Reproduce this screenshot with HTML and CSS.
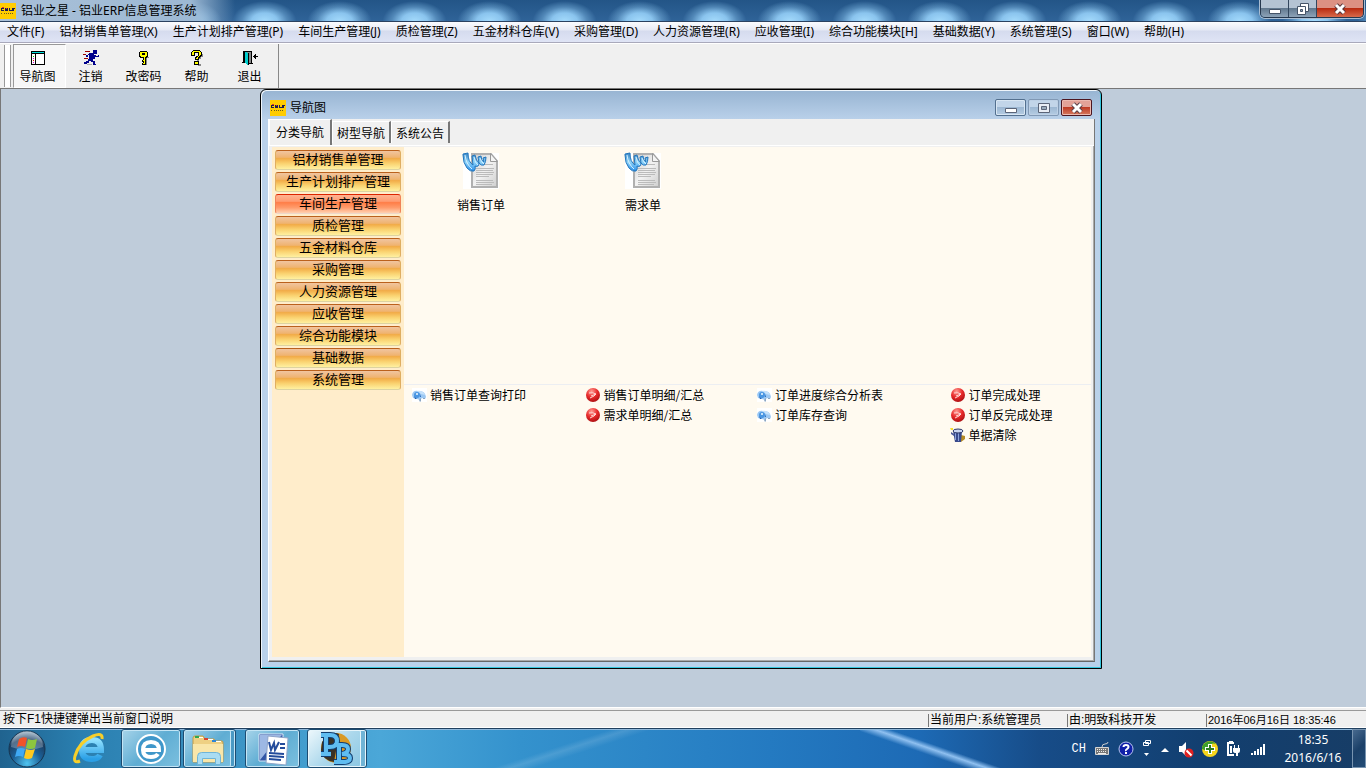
FILE: index.html
```html
<!DOCTYPE html>
<html lang="zh-CN">

<head>
  <meta charset="utf-8">
  <meta name="viewport" content="width=device-width, initial-scale=1">
  <title>铝业之星 - 铝业ERP信息管理系统</title>
  <link rel="stylesheet" href="styles.css">
</head>

<body>
  <!-- shared icons -->
  <svg class="defs" aria-hidden="true">
    <defs>
      <linearGradient id="pageFill" x1="0" y1="0" x2="1" y2="1">
        <stop offset="0" stop-color="#c9c9c9" />
        <stop offset="0.5" stop-color="#f2f2f2" />
        <stop offset="1" stop-color="#cfcfcf" />
      </linearGradient>
      <linearGradient id="clipFill" x1="0" y1="0" x2="0" y2="1">
        <stop offset="0" stop-color="#3a86c4" />
        <stop offset="0.5" stop-color="#8fd4fa" />
        <stop offset="1" stop-color="#2a8fe8" />
      </linearGradient>
      <radialGradient id="redFill" cx="0.4" cy="0.25" r="0.8">
        <stop offset="0" stop-color="#ff9c94" />
        <stop offset="0.5" stop-color="#e82c2c" />
        <stop offset="1" stop-color="#a80c10" />
      </radialGradient>
      <radialGradient id="orbFill" cx="0.5" cy="0.9" r="0.9">
        <stop offset="0" stop-color="#4fc4f0" />
        <stop offset="0.45" stop-color="#1b5f96" />
        <stop offset="0.75" stop-color="#1c3f63" />
        <stop offset="1" stop-color="#a5bccd" />
      </radialGradient>
      <linearGradient id="ieFill" x1="0" y1="0" x2="0" y2="1">
        <stop offset="0" stop-color="#8fe0ff" />
        <stop offset="1" stop-color="#2a9fe6" />
      </linearGradient>
      <symbol id="logo" viewBox="0 0 16 16">
        <path fill="#ffcc00" d="M0 0h16v16H0z" />
        <path fill="#1c1c50" d="M1 5h3v1H2v1h2v1H1zM5 5h3v3H5zM9 5h1v2h2v1H9zM12 5h3v1h-1v2h-2z" />
        <path fill="#d33" d="M2 4h2v1H2zM6 5h1v1H6z" />
        <path fill="#6b5a20" d="M1 10h1v1H1zM4 10h1v1H4zM6 10h1v1H6zM8 10h1v1H8zM10 10h1v1h-1zM12 10h1v1h-1z" />
      </symbol>
      <symbol id="doc" viewBox="0 0 38 38">
        <path fill="#fff" d="M1 1h36v36H1z" />
        <path fill="url(#pageFill)" stroke="#b0b0b0" stroke-width="2" d="M10 2h19l6 7v26H10z" />
        <path fill="#f4f4f4" stroke="#999" d="M28.500 1.500v8h7z" />
        <path stroke="#bbb" stroke-width="1"
          d="M22 12.500h9M14 16.500h18M14 18.500h17M14 20.500h18M14 22.500h17M14 24.500h13M14 28.500h17M14 30.500h18M14 32.500h16" />
        <path fill="url(#clipFill)" stroke="#2476bc" stroke-width="1"
          d="M1 2l5-1q0 9 5 12l-1-9l3-1q1 6 4 8l-1-6l3-1q0 4 3 6l-1-4l3-1q0 5-2 8q-3 1-5-2q0 3-1 3q-2 1-3 0q1 3-1 5q-4 1-7-3q-4-5-4-13z" />
        <path fill="none" stroke="#d6f1ff" stroke-width="1" d="M3 3q1 9 7 14M12 5q1 6 4 8M18 6q1 4 4 6" />
      </symbol>
      <symbol id="bubble" viewBox="0 0 16 16">
        <path fill="#fff" d="M1 1h15v14H1z" />
        <path fill="#9cc8f3" d="M1 8q1-5 6-4q7-1 8 6l-1 2l-3-1l-2 2l-3-1l-4-1z" />
        <path fill="#c4e1fb" d="M6 4q6-1 8 4l-4-1z" />
        <circle cx="6" cy="8" r="3" fill="#4a96e2" />
        <circle cx="6" cy="7" r="1" fill="#f0faff" />
        <path fill="#1e62b5" d="M3 9l3 3H4zM9 7l1 3H9z" />
        <path fill="#8ba6c2" d="M8 13l2-2v3l-1 1zM12 11h2v1h-2z" />
      </symbol>
      <symbol id="red" viewBox="0 0 16 16">
        <circle cx="8" cy="8" r="7" fill="url(#redFill)" />
        <path fill="none" stroke="#ffd9d6" stroke-width="1" d="M4 6q4-1 7 1q-1 2-6 4M6 9l5-2" />
      </symbol>
      <symbol id="trash" viewBox="0 0 16 16">
        <path fill="#b58a22" d="M11 8l4 1v3l-4 3z" />
        <path fill="#394a8c" d="M3 4h9l-1 11H5z" />
        <path fill="#8aa0dc" d="M5 6h1v7H5zM8 6h1v8H8z" />
        <ellipse cx="8" cy="4" rx="5" ry="2" fill="#c9d4f1" stroke="#2c3767" />
        <path fill="#f6dd30" d="M0 1h3v2H1z" />
        <path fill="#4a5797" d="M1 5l3 2v2L1 7z" />
      </symbol>
    </defs>
  </svg>

  <header class="titlebar">
    <svg class="logo" aria-hidden="true"><use href="#logo" /></svg>
    <h1>铝业之星 - 铝业ERP信息管理系统</h1>
    <div class="frameButtons">
      <button type="button" class="fmin" aria-label="最小化"><svg viewBox="0 0 12 12"><path fill="#fff" stroke="#455468" d="M.5 6.500h11v4H.5z" /></svg></button>
      <button type="button" class="fmax" aria-label="还原"><svg viewBox="0 0 12 12"><path fill="#fff" stroke="#455468" d="M3.500.5h8v8h-8z" /><path fill="#fff" stroke="#455468" d="M.5 3.500h8v8h-8z" /><path fill="#8fa5bd" stroke="#455468" d="M3.500 6.500h2v2h-2z" /></svg></button>
      <button type="button" class="fclose" aria-label="关闭"><svg viewBox="0 0 12 12"><path stroke="#57353a" stroke-width="5" d="M2 2l8 8M10 2l-8 8" /><path stroke="#fff" stroke-width="3" d="M2 2l8 8M10 2l-8 8" /></svg></button>
    </div>
  </header>

  <nav class="menubar">
    <button type="button">文件(F)</button>
    <button type="button">铝材销售单管理(X)</button>
    <button type="button">生产计划排产管理(P)</button>
    <button type="button">车间生产管理(J)</button>
    <button type="button">质检管理(Z)</button>
    <button type="button">五金材料仓库(V)</button>
    <button type="button">采购管理(D)</button>
    <button type="button">人力资源管理(R)</button>
    <button type="button">应收管理(I)</button>
    <button type="button">综合功能模块[H]</button>
    <button type="button">基础数据(Y)</button>
    <button type="button">系统管理(S)</button>
    <button type="button">窗口(W)</button>
    <button type="button">帮助(H)</button>
  </nav>

  <div class="toolbar">
    <div class="tools">
      <button type="button" class="pressed">
        <svg viewBox="0 0 16 16" shape-rendering="crispEdges"><path d="M1 1h14v14H1z" /><path fill="#fff" d="M2 4h3v10H2zM6 4h8v10H6z" /><path fill="#0dd" d="M2 2h12v1H2z" /><path fill="#0c0" d="M3 6h1v1H3z" /><path fill="#d0d" d="M3 8h1v1H3zM3 12h1v1H3z" /><path fill="#d00" d="M3 10h1v1H3z" /></svg>
        导航图
      </button>
      <button type="button">
        <svg viewBox="0 0 16 16" shape-rendering="crispEdges"><path fill="#00008b" d="M10 0h4v4h-4zM6 3h5v2h2v1h2V5h1v2h-4v2h-2v2h2v3h1v1h-3v-3H8v-1H6v2H4v1H1v-2h2v-1h2V9h1V5H5v2H3V5h2V4h1z" /><path fill="#900" d="M2 1h5v1H2zM0 4h3v1H0zM1 8h4v1H1z" /><path fill="#aaa" d="M4 14h5v1H4z" /></svg>
        注销
      </button>
      <button type="button">
        <svg viewBox="0 0 16 16" shape-rendering="crispEdges"><path fill="#888" d="M8 7h5v1h-2v7H9z" /><path d="M4 1h7v1h1v5h-1v1h-1v7H6v-2h1v-1H6v-2h1V8H4V7H3V2h1z" /><path fill="#ff0" d="M4 2h7v4h-1v1H9v7H7v-1h1v-2H7v-1h1V7H5V6H4z" /><path d="M6 3h3v2H6z" /></svg>
        改密码
      </button>
      <button type="button">
        <svg viewBox="0 0 16 16" shape-rendering="crispEdges"><path fill="#888" d="M12 4h2v3h-2v2h-2v2H8V9h2V7h2zM9 14h3v2H9z" /><path d="M4 0h7v1h1v1h1v4h-1v1h-1v1h-1v2H6V7h1V6h2V3H6v3H2V2h1V1h1zM5 11h5v4H5z" /><path fill="#ff0" d="M4 1h7v1h1v3h-1v1h-1v1H9v2H7V8h1V7h1V6h1V2H5v3H3V2h1zM6 12h3v2H6z" /></svg>
        帮助
      </button>
      <button type="button">
        <svg viewBox="0 0 16 16" shape-rendering="crispEdges"><path d="M1 1h9v12h1v1H7v-1h2V2H2v11H0v-1h1z" /><path fill="#888" d="M5 2h4v11H7V3H5z" /><path fill="#0cc" d="M3 2h2v1h1v12H5v-1H4v-1H3z" /><path d="M2 2h1v11H2zM6 3h1v12H6zM11 6h1V5h1V4h1v2h2v1h-2v2h-1V8h-1V7h-1z" /></svg>
        退出
      </button>
    </div>
  </div>

  <main class="workspace">
    <section class="window">
      <div class="windowTitle">
        <svg class="logo" aria-hidden="true"><use href="#logo" /></svg>
        <h2>导航图</h2>
        <button type="button" aria-label="最小化"><svg viewBox="0 0 12 12"><path fill="#fff" stroke="#5a6478" d="M.5 6.500h11v4H.5z" /></svg></button>
        <button type="button" class="dim" aria-label="最大化"><svg viewBox="0 0 12 12"><path fill="#e8edf5" stroke="#5a6478" d="M.5 1.500h11v9H.5z" /><path fill="#9ab" stroke="#5a6478" d="M3.500 4.500h5v3h-5z" /></svg></button>
        <button type="button" class="close" aria-label="关闭"><svg viewBox="0 0 12 12"><path stroke="#5b4148" stroke-width="5" d="M2 2l8 8M10 2l-8 8" /><path stroke="#fff" stroke-width="3" d="M2 2l8 8M10 2l-8 8" /></svg></button>
      </div>

      <div class="windowBody">
        <div class="tabs">
          <button type="button" class="active">分类导航</button>
          <button type="button">树型导航</button>
          <button type="button">系统公告</button>
        </div>

        <div class="panel">
          <div class="sidebar">
            <button type="button">铝材销售单管理</button>
            <button type="button">生产计划排产管理</button>
            <button type="button" class="hot">车间生产管理</button>
            <button type="button">质检管理</button>
            <button type="button">五金材料仓库</button>
            <button type="button">采购管理</button>
            <button type="button">人力资源管理</button>
            <button type="button">应收管理</button>
            <button type="button">综合功能模块</button>
            <button type="button">基础数据</button>
            <button type="button">系统管理</button>
          </div>

          <div class="content">
            <div class="docs">
              <a href="#"><svg aria-hidden="true"><use href="#doc" /></svg>销售订单</a>
              <a href="#"><svg aria-hidden="true"><use href="#doc" /></svg>需求单</a>
            </div>
            <div class="links">
              <div>
                <a href="#"><svg aria-hidden="true"><use href="#bubble" /></svg>销售订单查询打印</a>
              </div>
              <div>
                <a href="#"><svg aria-hidden="true"><use href="#red" /></svg>销售订单明细/汇总</a>
                <a href="#"><svg aria-hidden="true"><use href="#red" /></svg>需求单明细/汇总</a>
              </div>
              <div>
                <a href="#"><svg aria-hidden="true"><use href="#bubble" /></svg>订单进度综合分析表</a>
                <a href="#"><svg aria-hidden="true"><use href="#bubble" /></svg>订单库存查询</a>
              </div>
              <div>
                <a href="#"><svg aria-hidden="true"><use href="#red" /></svg>订单完成处理</a>
                <a href="#"><svg aria-hidden="true"><use href="#red" /></svg>订单反完成处理</a>
                <a href="#"><svg aria-hidden="true"><use href="#trash" /></svg>单据清除</a>
              </div>
            </div>
          </div>
        </div>
      </div>
    </section>
  </main>

  <div class="statusbar">
    <span class="hint">按下F1快捷键弹出当前窗口说明</span>
    <span class="cell">当前用户:系统管理员</span>
    <span class="cell">由:明致科技开发</span>
    <span class="cell time">2016年06月16日 18:35:46</span>
  </div>

  <footer class="taskbar">
    <button type="button" class="launch" aria-label="开始">
      <svg viewBox="0 0 38 38"><circle cx="19" cy="19" r="18" fill="url(#orbFill)" stroke="#16344f" /><path fill="#fff" opacity="0.25" d="M3 17a16 16 0 0 1 32 0q-16 6-32 0z" /><path fill="#f0532a" d="M11 9q4-3 8-1l-2 9q-4-2-8 0z" /><path fill="#8cc63f" d="M20 9q4 2 9 0l-2 9q-5 2-9 0z" /><path fill="#3fa9f5" d="M9 19q4-2 8 0l-2 8q-4-2-8 0z" /><path fill="#ffc91f" d="M18 19q4 2 9 0l-3 9q-4 2-8 0z" /></svg>
    </button>
    <button type="button" class="launch" aria-label="Internet Explorer">
      <svg viewBox="0 0 38 38"><path fill="none" stroke="url(#ieFill)" stroke-width="6" d="M12 20h19q0-10-9-10q-10 0-10 10q0 9 10 9q6 0 8-4" /><path fill="none" stroke="#f7cf2b" stroke-width="3" d="M10 31q-7 3-5-5q4-14 18-20q10-4 9 3" /></svg>
    </button>
    <button type="button" class="task wide" aria-label="浏览器">
      <svg viewBox="0 0 38 38"><circle cx="19" cy="19" r="14" fill="#3f97ca" stroke="#fff" stroke-width="2" /><path fill="none" stroke="#fff" stroke-width="4" d="M11 20h16q0-8-8-8q-8 0-8 8q0 7 8 7q5 0 7-3" /></svg>
    </button>
    <button type="button" class="task stack" aria-label="文件夹">
      <svg viewBox="0 0 38 38"><path fill="#eed083" stroke="#c29b46" d="M4 8q0-2 2-2h8l2 3h9l1 2h7q1 0 1 2v19H4z" /><path fill="#2fa84f" d="M6 6h4v2H6z" /><path fill="#d9442e" d="M15 8h4v2h-4z" /><path fill="#2e86d6" d="M23 10h4v2h-4z" /><path fill="#fff" d="M10 7h4v1h-4zM19 9h5v1h-5zM27 11h5v1h-5z" /><path fill="#f9e6a9" d="M4 14h30v18H4z" /><path fill="#a9dcf2" stroke="#6fb4d6" d="M8.500 34.500v-8q0-4 4-4h15q4 0 4 4v8h-5v-6h-13v6z" /></svg>
    </button>
    <button type="button" class="task double" aria-label="Word">
      <svg viewBox="0 0 38 38"><path fill="#3156a6" stroke="#dce6f6" d="M5 4h24v27H5z" /><path fill="#9db8e4" d="M6 5h22l-10 10L6 30z" /><path fill="#fff" stroke="#8ea4c9" d="M14 6l20 2l-2 27l-20-2z" /><path fill="none" stroke="#234b9b" stroke-width="2" d="M15 12l2 8l3-7l1 7l4-8" /><path stroke="#234b9b" stroke-width="2" d="M26 14h5M26 18h5M15 23l15 1M15 26l15 1M15 29l12 1" /></svg>
    </button>
    <button type="button" class="task current" aria-label="PowerBuilder">
      <svg viewBox="0 0 38 38"><circle cx="20" cy="18" r="15" fill="#d99a25" /><path fill="#393226" d="M6 12q9-12 17-8l-5 28q-12-2-13-12z" /><path fill="none" stroke="#123e70" stroke-width="6" d="M5 5h9q7 0 7 6t-7 6h-4M10 5v19M5 24h10M18 15h8q6 0 6 4t-6 5q8 0 8 4t-7 4h-9M23 15v17" /><path fill="none" stroke="#5fbdf1" stroke-width="4" d="M5 5h9q7 0 7 6t-7 6h-4M10 5v19M5 24h10M18 15h8q6 0 6 4t-6 5q8 0 8 4t-7 4h-9M23 15v17" /></svg>
    </button>

    <div class="tray">
      <span class="lang">CH</span>
      <svg viewBox="0 0 16 16"><path fill="none" stroke="#ccc" d="M8 6q0-3 3-3t3-2" /><path fill="#777" stroke="#d5d5d5" d="M1.500 6.500h13v7h-13z" /><path stroke="#eee" stroke-dasharray="1 1" d="M3 8.500h10M3 10.500h10" /><path stroke="#eee" d="M4 12.500h8" /></svg>
      <svg viewBox="0 0 16 16"><circle cx="8" cy="8" r="7" fill="#1020a8" stroke="#b8c4ee" /><path fill="none" stroke="#fff" stroke-width="2" d="M5.500 6q0-2 2.500-2t2.500 2q0 1-1.500 2T8 10" /><path fill="#fff" d="M7 11h2v2H7z" /></svg>
      <svg class="narrow" viewBox="0 0 10 20"><path fill="none" stroke="#fff" d="M3.500 1.500h5v3h-5zM1.500 3.500h5v3h-5z" /><path fill="#fff" d="M2 14h5l-2.500 3z" /></svg>
      <svg class="narrow" viewBox="0 0 10 20"><path fill="#fff" d="M1 13h8L5 9z" /></svg>
      <svg viewBox="0 0 16 20"><path fill="#fff" d="M1 7h3l4-4v14l-4-4H1z" /><circle cx="11" cy="14" r="4.500" fill="#e02020" /><path stroke="#fff" stroke-width="2" d="M8.500 11.500l5 5" /></svg>
      <svg viewBox="0 0 16 20"><circle cx="8" cy="10" r="8" fill="#f6d51c" /><path fill="#3fa02c" d="M0 10a8 8 0 0 1 14-5q-5-2-7 3t-7 2z" /><path fill="#fff" d="M6 5h4v3h3v4h-3v3H6v-3H3V8h3z" /><path fill="#2d7f20" d="M7 6h2v3h3v2H9v3H7v-3H4V9h3z" /></svg>
      <svg viewBox="0 0 16 20"><path fill="none" stroke="#fff" stroke-width="2" d="M8 4H2v12h6" /><path fill="#fff" d="M3 2h4v2H3zM8 6h1v3h3V6h1v3h1v3q0 2-2 2v3h-2v-3q-3 0-3-2V9h1zM4 7h2v7H4z" /></svg>
      <svg viewBox="0 0 16 20"><path fill="#fff" d="M1 14h2v2H1zM4 12h2v4H4zM7 10h2v6H7zM10 8h2v8h-2zM13 5h2v11h-2z" /></svg>
      <div class="clock">18:35<br>2016/6/16</div>
    </div>
    <button type="button" class="showDesktop" aria-label="显示桌面"></button>
  </footer>
</body>

</html>
```
FILE: styles.css
```css
* {
  box-sizing: border-box;
}

body {
  margin: 0;
  height: 100vh;
  display: flex;
  flex-direction: column;
  overflow: hidden;
  background: #f0f0f0;
  color: #000;
  font: 12px/16px "Noto Sans", "Noto Sans CJK SC", sans-serif;
}

button {
  margin: 0;
  padding: 0;
  border: none;
  background: none;
  color: inherit;
  font: inherit;
  white-space: nowrap;
}

a {
  color: inherit;
  text-decoration: none;
}

h1,
h2 {
  margin: 0;
  font-size: 12px;
  font-weight: normal;
}

svg {
  display: block;
  flex: none;
}

.defs {
  position: absolute;
  width: 0;
  height: 0;
}

.logo {
  width: 16px;
  height: 16px;
}

/* main frame */
.titlebar {
  flex: none;
  height: 22px;
  display: flex;
  align-items: center;
  gap: 5px;
  padding-right: 2px;
  border-bottom: 1px solid #2b4260;
  background:
    linear-gradient(90deg, #a9c0d8 0, #9db9d4 190px, transparent 235px),
    radial-gradient(ellipse 32px 20px at 50% 100%, #a4dafc 0, #8ac4ee 40%, #8ac4ee66 70%, transparent 100%) 2px 0 / 75px 100%,
    linear-gradient(#235587, #2f6398);
}

.titlebar h1 {
  flex: 1;
}

.frameButtons {
  align-self: flex-start;
  display: flex;
  height: 18px;
  border: 1px solid #26384e;
  border-top: none;
  border-radius: 0 0 5px 5px;
  overflow: hidden;
  box-shadow: 0 0 0 1px #a9bdd2;
}

.frameButtons button {
  display: grid;
  place-items: center;
  width: 28px;
  background: linear-gradient(#b4c3d3 45%, #62798f 50%, #8da3b8);
  border-right: 1px solid #33475e;
}

.frameButtons svg,
.windowTitle button svg {
  width: 12px;
  height: 12px;
}

.frameButtons .fclose {
  width: 46px;
  border-right: none;
  background: linear-gradient(#dc9183 45%, #b92c12 50%, #d86a4b);
}

.menubar {
  flex: none;
  height: 21px;
  display: flex;
  align-items: center;
  gap: 15px;
  padding: 0 7px;
  background: linear-gradient(#fbfcfe, #e6eaf5 40%, #d5dbee 45%, #dfe4f5);
  border-bottom: 1px solid #a9a9bb;
}

.toolbar {
  flex: none;
  height: 45px;
  display: flex;
  border-top: 1px solid #fff;
  background: #f0f0f0;
}

.tools {
  display: flex;
  padding-left: 4px;
  border-right: 1px solid #888;
}

.tools::before {
  content: "";
  width: 5px;
  margin: 1px 2px 1px 0;
  border: solid #999;
  border-width: 0 1px;
  background: #fff;
}

.tools button {
  width: 53px;
  display: flex;
  flex-direction: column;
  align-items: center;
  gap: 3px;
  padding: 6px 4px 0 0;
}

.tools svg {
  width: 16px;
  height: 16px;
}

.tools .pressed {
  border: 1px solid #fff;
  border-top-color: #999;
  border-left-color: #999;
  background: #f7f7f7;
  padding-top: 5px;
}

.workspace {
  flex: 1;
  position: relative;
  border: solid #777;
  border-width: 1px 0 0 1px;
  border-bottom: 1px solid #fff;
  background: #bfccda;
}

/* child window */
.window {
  position: absolute;
  top: 0;
  bottom: 38px;
  left: 259px;
  right: 264px;
  display: flex;
  flex-direction: column;
  padding: 0 6px 6px 7px;
  border: 1px solid #000;
  border-radius: 6px 6px 0 0;
  background: linear-gradient(#97b4d2, #bad1ea 30px, #b9d1ea);
  box-shadow: inset 1px 1px #eef5fb, inset -1px -1px #35c6dd;
}

.windowTitle {
  flex: none;
  height: 29px;
  display: flex;
  align-items: center;
  gap: 2px;
  padding: 6px 3px 0 2px;
}

.windowTitle h2 {
  flex: 1;
  padding-left: 2px;
}

.windowTitle button {
  width: 31px;
  height: 17px;
  display: grid;
  place-items: center;
  border: 1px solid #53708f;
  border-radius: 2px;
  background: linear-gradient(#c2d5e9 45%, #9db8d3 50%, #b5cce3);
  box-shadow: inset 0 0 0 1px #d8e6f3;
}

.windowTitle .dim {
  border-color: #8199b5;
  box-shadow: inset 0 0 0 1px #bdd0e5;
}

.windowTitle .close {
  border-color: #4c1620;
  background: linear-gradient(#e3a298 45%, #bf3c26 50%, #d57a60);
  box-shadow: inset 0 0 0 1px #ecb9b0;
}

.windowBody {
  flex: 1;
  display: flex;
  flex-direction: column;
  border-right: 1px solid #777;
  border-bottom: 1px solid #666;
  border-left: 1px solid #fff;
  background: #f0f0f0;
  font-family: "Noto Sans CJK SC", sans-serif;
}

.tabs {
  flex: none;
  height: 27px;
  display: flex;
  align-items: flex-end;
  border-bottom: 1px solid #fff;
}

.tabs button {
  width: 59px;
  height: 22px;
  margin-bottom: 2px;
  border-top: 1px solid #fff;
  border-left: 1px solid #fff;
  border-right: 2px solid #777;
}

.tabs .active {
  width: 63px;
  height: 26px;
  margin: 0;
  padding-bottom: 2px;
}

.panel {
  flex: 1;
  display: flex;
  padding: 1px 2px 3px 3px;
  border-right: 1px solid #aaa;
  border-bottom: 1px solid #aaa;
}

.sidebar {
  flex: none;
  width: 132px;
  display: flex;
  flex-direction: column;
  gap: 2px;
  padding: 3px;
  background: #ffedcb;
}

.sidebar button {
  height: 20px;
  padding-bottom: 2px;
  border: 1px solid #dfae62;
  border-top-color: #bb611c;
  border-bottom-color: #ddd3a0;
  border-radius: 3px;
  background: linear-gradient(#f1c5a0, #efb370 35%, #f2ac48 42%, #fad371 70%, #fff0a0);
  font-size: 13px;
  line-height: 16px;
}

.sidebar .hot {
  border-color: #f08358;
  border-top-color: #dc2300;
  border-bottom-color: #eed6c8;
  background: linear-gradient(#ffb391, #ff9c72 35%, #ff7e48 42%, #ff9b6b 70%, #ffd0b0);
}

.content {
  flex: 1;
  background: #fffaf0;
}

.docs {
  height: 238px;
  display: flex;
  align-items: flex-start;
  gap: 52px;
  padding: 5px 0 0 22px;
  border-bottom: 1px solid #eceef2;
}

.docs a {
  width: 110px;
  display: flex;
  flex-direction: column;
  align-items: center;
  gap: 7px;
}

.docs svg {
  width: 38px;
  height: 38px;
}

.links {
  display: grid;
  grid-template-columns: 173fr 171fr 193fr 141fr;
  padding-left: 7px;
}

.links a {
  height: 20px;
  display: flex;
  align-items: center;
  gap: 3px;
}

.links svg {
  width: 16px;
  height: 16px;
}

/* status line */
.statusbar {
  flex: none;
  height: 18px;
  display: flex;
  margin-top: 2px;
  overflow: hidden;
  border-top: 1px solid #999;
  border-bottom: 1px solid #fff;
  font-family: "Liberation Sans", "Noto Sans CJK SC", sans-serif;
}

.hint {
  flex: 1;
  padding-left: 3px;
}

.cell {
  width: 139px;
  margin-top: 3px;
  padding-left: 1px;
  border-left: 1px solid #777;
  line-height: 13px;
  white-space: nowrap;
}

.cell.time {
  width: 160px;
  font-size: 11px;
}

/* taskbar */
.taskbar {
  flex: none;
  height: 40px;
  display: flex;
  align-items: stretch;
  border-top: 1px solid #21405f;
  box-shadow: inset 0 1px #8fb9dc;
  background:
    linear-gradient(342deg, transparent 42%, #ffffff20 50%, transparent 56%) 480px 0 / 180px 100% no-repeat,
    linear-gradient(19deg, transparent 42%, #8fc0f0 50%, transparent 56%) 860px 0 / 140px 100% no-repeat,
    linear-gradient(90deg, #20638f 0, #2a7fb0 80px, #4ba7d8 380px, #3492cd 520px, #247ac1 770px, #1d6ab5 920px, #174c88 1040px, #123f70 1200px, #173d66);
  color: #fff;
}

.taskbar svg {
  width: 38px;
  height: 38px;
}

.launch {
  width: 62px;
  padding-left: 8px;
}

.launch:first-child {
  width: 59px;
}

.launch + .launch {
  padding-left: 11px;
}

.task {
  width: 55px;
  margin-right: 7px;
  display: grid;
  place-items: center;
  border: 1px solid #1c4c72;
  border-radius: 3px;
  background: linear-gradient(135deg, #a7d4ea, #5fadd3 50%, #7cc0df);
  box-shadow: inset 0 0 0 1px #c4e5f5;
}

.task.wide {
  width: 60px;
  margin-right: 2px;
}

.task.stack {
  width: 53px;
  margin-right: 9px;
  padding-right: 4px;
  box-shadow: inset 0 0 0 1px #c4e5f5, inset -4px 0 #4a99c4, inset -5px 0 #c4e5f5;
}

.task.current {
  width: 60px;
  padding-right: 5px;
  background: linear-gradient(135deg, #eef8fc, #acd8ec 50%, #87c5e2);
  box-shadow: inset 0 0 0 1px #e6f5fb, inset -5px 0 #70b4d6, inset -6px 0 #e6f5fb;
}

.tray {
  display: flex;
  align-items: center;
  gap: 8px;
  margin-left: auto;
}

.tray svg {
  width: 16px;
  height: 16px;
}

.tray svg[viewBox$="20"] {
  height: 20px;
}

.tray .narrow {
  width: 10px;
  height: 20px;
}

.lang {
  font-family: "Liberation Mono", monospace;
}

.clock {
  width: 78px;
  line-height: 18px;
  text-align: center;
}

.showDesktop {
  width: 14px;
  border: 1px solid #7894b0;
  background: linear-gradient(135deg, #47698e, #1b4068 50%, #234c76);
}
```
